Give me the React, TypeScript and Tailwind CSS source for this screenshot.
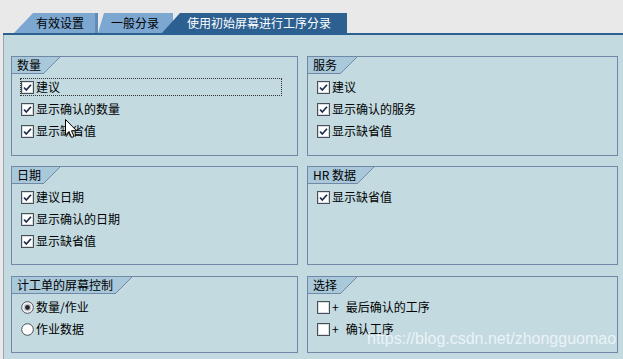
import * as React from 'react';

const FONT = '"Noto Sans CJK SC", "Noto Sans", sans-serif';

function CheckBox({ checked }: { checked: boolean }) {
  return (
    <svg width="13" height="13" viewBox="0 0 13 13" className="shrink-0">
      <rect x="0.5" y="0.5" width="12" height="12" fill="#ffffff" stroke="#4a4f57" />
      <rect x="1.5" y="1.5" width="10" height="10" fill="none" stroke="#d6dde3" />
      {checked && (
        <path d="M3 6.5 L5.3 9 L10 3.8" fill="none" stroke="#1d2b4f" strokeWidth="1.7" />
      )}
    </svg>
  );
}

function Radio({ checked }: { checked: boolean }) {
  return (
    <svg width="13" height="13" viewBox="0 0 13 13" className="shrink-0">
      <circle cx="6.5" cy="6.5" r="5.8" fill="#ffffff" stroke="#4a4f57" />
      {checked && <circle cx="6.5" cy="6.5" r="4" fill="#c9ccd1" />}
      {checked && <circle cx="6.5" cy="6.5" r="2.4" fill="#25282d" />}
    </svg>
  );
}

type Item = { label: string; kind: 'check' | 'radio'; checked: boolean; focused?: boolean; plus?: boolean };

function GroupBox({ title, items, height, titleWidth }: { title: string; items: Item[]; height: string; titleWidth: string }) {
  return (
    <div className={`relative border border-[#7189a6] bg-[#c3dae1] ${height}`}>
      <div className="flex h-[17px]">
        <div className={`flex h-[17px] items-center border-b border-[#7189a6] bg-[#a9c8d9] pl-[5px] text-[12px] leading-none ${titleWidth}`}>
          {title}
        </div>
        <svg width="17" height="17" viewBox="0 0 17 17" className="shrink-0">
          <polygon points="0,0 17,0 0,17" fill="#a9c8d9" />
          <line x1="17" y1="0" x2="0" y2="17" stroke="#7189a6" />
          <line x1="0" y1="16.5" x2="1" y2="16.5" stroke="#7189a6" />
        </svg>
      </div>
      <div className="flex flex-col gap-[4px] pt-[4px]">
        {items.map((it) => (
          <div
            key={it.label}
            className={`ml-[8px] flex h-[18px] w-[262px] items-center gap-[2px] border text-[12px] ${
              it.focused ? 'border-dotted border-[#333]' : 'border-transparent'
            }`}
          >
            {it.kind === 'check' ? <CheckBox checked={it.checked} /> : <Radio checked={it.checked} />}
            {it.plus && <span className="mr-[5px] leading-none">+</span>}
            <span className="leading-none">{it.label}</span>
          </div>
        ))}
      </div>
    </div>
  );
}

export default function App() {
  return (
    <div className="relative h-[359px] w-[623px] overflow-hidden bg-[#e9e9e9] text-black" style={{ fontFamily: FONT }}>
      <div className="flex h-[33px] items-end pl-[14px]">
        <div className="flex h-[20px] w-[84px] items-center justify-end border-r-[3px] border-[#5f8bb6] bg-[#7ba7d1] pr-[11px] text-[12px] [clip-path:polygon(19px_0,100%_0,100%_100%,0_100%)]">
          有效设置
        </div>
        <div className="flex h-[20px] w-[75px] items-center bg-[#7ba7d1] pl-[13px] text-[12px] [clip-path:polygon(6px_0,100%_0,100%_100%,0_100%)]">
          一般分录
        </div>
        <div className="-ml-[11px] flex h-[20px] w-[185px] items-center bg-[#2c6090] pl-[25px] text-[12px] text-white [clip-path:polygon(18px_0,100%_0,100%_100%,0_100%)]">
          使用初始屏幕进行工序分录
        </div>
      </div>
      <div className="ml-[3px] h-[2px] bg-[#2c6090]" />
      <div className="ml-[3px] h-[324px] border-l border-[#9aa6b1] bg-[#c3dae1] pl-[7px] pt-[21px]">
        <div className="grid grid-cols-[287px_311px] gap-x-[9px]">
          <div className="flex flex-col">
            <GroupBox
              title="数量"
              height="h-[100px]"
              titleWidth="w-[31px]"
              items={[
                { label: '建议', kind: 'check', checked: true, focused: true },
                { label: '显示确认的数量', kind: 'check', checked: true },
                { label: '显示缺省值', kind: 'check', checked: true },
              ]}
            />
            <div className="mt-[10px]">
              <GroupBox
                title="日期"
                height="h-[99px]"
                titleWidth="w-[31px]"
                items={[
                  { label: '建议日期', kind: 'check', checked: true },
                  { label: '显示确认的日期', kind: 'check', checked: true },
                  { label: '显示缺省值', kind: 'check', checked: true },
                ]}
              />
            </div>
            <div className="mt-[11px]">
              <GroupBox
                title="计工单的屏幕控制"
                height="h-[77px]"
                titleWidth="w-[103px]"
                items={[
                  { label: '数量/作业', kind: 'radio', checked: true },
                  { label: '作业数据', kind: 'radio', checked: false },
                ]}
              />
            </div>
          </div>
          <div className="flex flex-col">
            <GroupBox
              title="服务"
              height="h-[100px]"
              titleWidth="w-[32px]"
              items={[
                { label: '建议', kind: 'check', checked: true },
                { label: '显示确认的服务', kind: 'check', checked: true },
                { label: '显示缺省值', kind: 'check', checked: true },
              ]}
            />
            <div className="mt-[10px]">
              <GroupBox
                title="HR 数据"
                height="h-[99px]"
                titleWidth="w-[49px]"
                items={[{ label: '显示缺省值', kind: 'check', checked: true }]}
              />
            </div>
            <div className="mt-[11px]">
              <GroupBox
                title="选择"
                height="h-[77px]"
                titleWidth="w-[32px]"
                items={[
                  { label: '最后确认的工序', kind: 'check', checked: false, plus: true },
                  { label: '确认工序', kind: 'check', checked: false, plus: true },
                ]}
              />
            </div>
          </div>
        </div>
      </div>

      <div
        className="pointer-events-none absolute left-[367px] top-[331px] text-[16px] leading-none text-white/70"
        style={{ fontFamily: '"Liberation Sans", Arial, sans-serif' }}
      >
        https://blog.csdn.net/zhongguomao
      </div>

      <svg className="absolute left-[65px] top-[119px]" width="13" height="20" viewBox="0 0 13 20">
        <path d="M0.5 0.5 L0.5 16 L4 12.5 L6.6 18.5 L9 17.5 L6.5 11.7 L11.5 11.7 Z" fill="#ffffff" stroke="#000000" strokeWidth="1" />
      </svg>
    </div>
  );
}
